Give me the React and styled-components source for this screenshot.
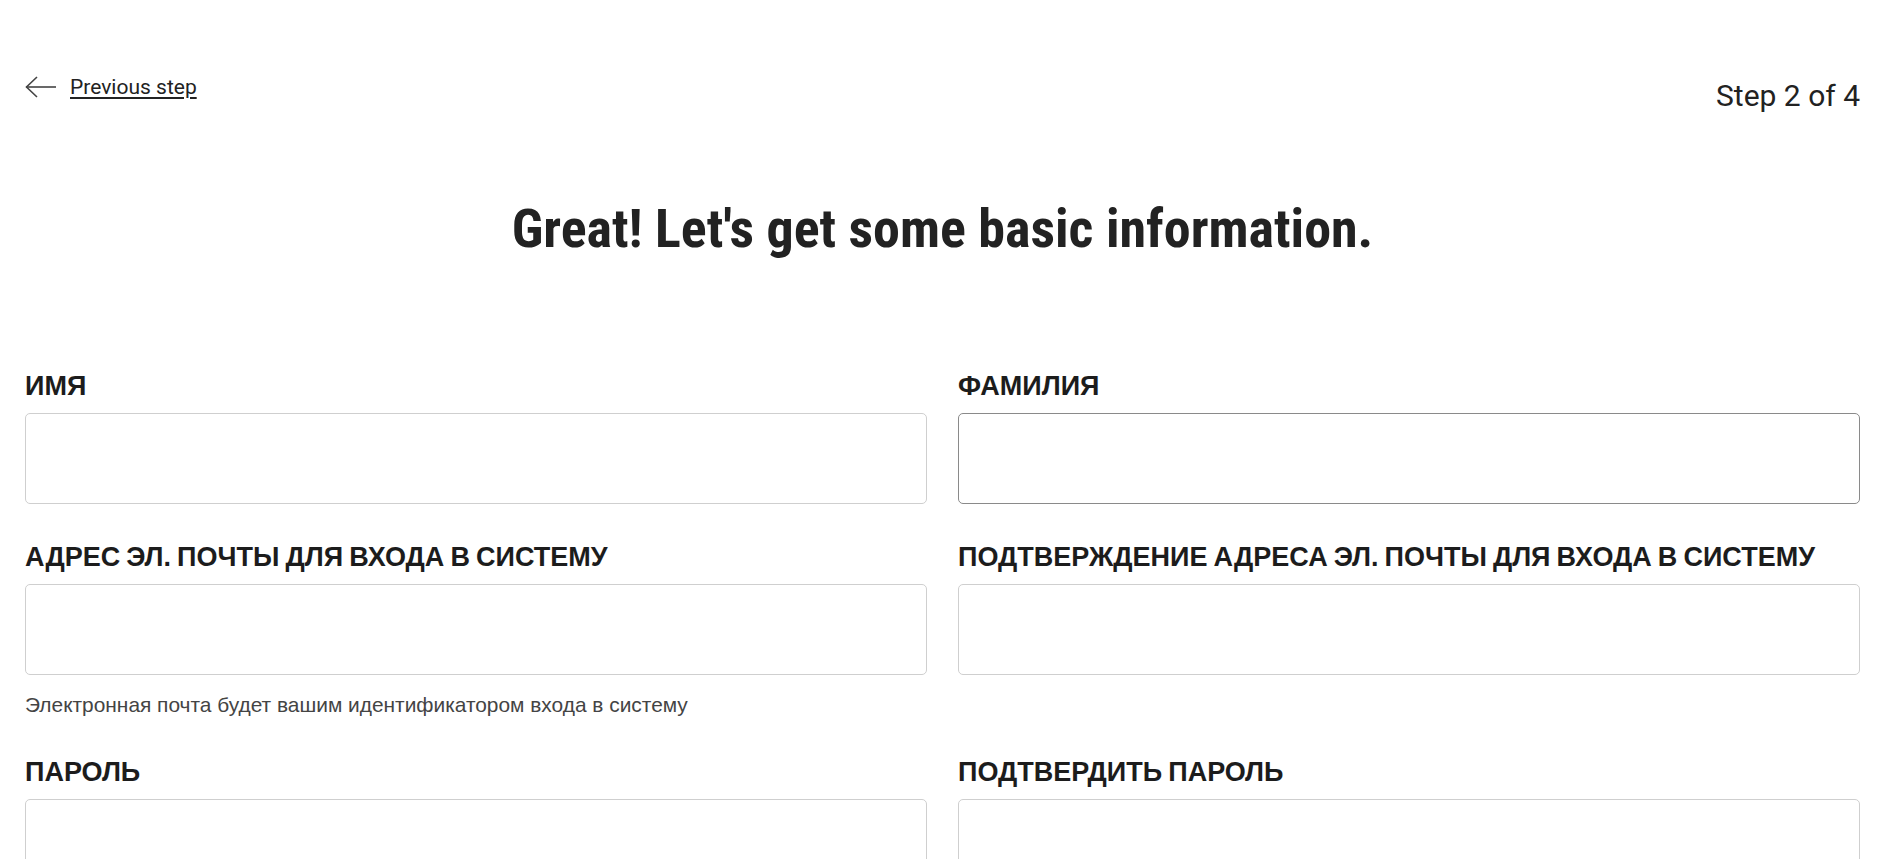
import React from "react";
import styled, { createGlobalStyle } from "styled-components";

const Global = createGlobalStyle`
  html, body { margin: 0; padding: 0; background: #fff; }
  body { font-family: "Liberation Sans", Arial, sans-serif; color: #222; }
  * { box-sizing: border-box; }
`;

const Page = styled.div`
  padding: 0 19px 0 25px;
`;

const Header = styled.header`
  display: flex;
  justify-content: space-between;
  align-items: flex-start;
  padding-top: 75px;
`;

const BackLink = styled.a`
  display: flex;
  align-items: center;
  gap: 14px;
  color: #222;
  font-family: Roboto, "Liberation Sans", sans-serif;
  font-size: 21px;
  line-height: 24px;
  text-decoration: none;
  cursor: pointer;
`;

const LinkText = styled.span`
  text-decoration: underline;
  text-decoration-thickness: 2px;
  text-underline-offset: 3px;
`;

const StepCount = styled.div`
  margin-top: 3px;
  font-family: Roboto, "Liberation Sans", sans-serif;
  font-size: 30px;
  line-height: 35px;
  color: #222;
`;

const Title = styled.h1`
  margin: 83px 0 0;
  text-align: center;
  font-family: "Roboto Condensed", Roboto, sans-serif;
  font-weight: 700;
  font-size: 54px;
  line-height: 65px;
  color: #222;
`;

const Form = styled.form`
  margin-top: 109px;
  display: grid;
  grid-template-columns: 1fr 1fr;
  column-gap: 31px;
  row-gap: 37px;
`;

const Field = styled.div`
  display: flex;
  flex-direction: column;
`;

const Label = styled.label`
  font-family: "Liberation Sans", Arial, sans-serif;
  font-weight: 700;
  font-size: 27px;
  line-height: 32px;
  word-spacing: -1.4px;
  color: #1c1c1c;
  margin-bottom: 11px;
`;

const Input = styled.input`
  height: 91px;
  width: 100%;
  border: 1px solid ${(p) => (p.$active ? "#8a8a8a" : "#cfcfcf")};
  border-radius: 5px;
  background: #fff;
  font-size: 22px;
  padding: 0 16px;
  outline: none;
`;

const Help = styled.div`
  margin: 17px 0 2px;
  font-family: "Liberation Sans", Arial, sans-serif;
  font-size: 20.9px;
  line-height: 25px;
  color: #444;
`;

const ArrowIcon = () => (
  <svg width="31" height="22" viewBox="0 0 31 22" fill="none">
    <path d="M1 11H31" stroke="#444" strokeWidth="1.6" />
    <path d="M12 1L1.5 11L12 21" stroke="#444" strokeWidth="1.6" fill="none" />
  </svg>
);

const fields = [
  { label: "ИМЯ" },
  { label: "ФАМИЛИЯ", active: true },
  {
    label: "АДРЕС ЭЛ. ПОЧТЫ ДЛЯ ВХОДА В СИСТЕМУ",
    help: "Электронная почта будет вашим идентификатором входа в систему",
  },
  { label: "ПОДТВЕРЖДЕНИЕ АДРЕСА ЭЛ. ПОЧТЫ ДЛЯ ВХОДА В СИСТЕМУ" },
  { label: "ПАРОЛЬ", type: "password" },
  { label: "ПОДТВЕРДИТЬ ПАРОЛЬ", type: "password" },
];

export default function App() {
  return (
    <Page>
      <Global />
      <Header>
        <BackLink>
          <ArrowIcon />
          <LinkText>Previous step</LinkText>
        </BackLink>
        <StepCount>Step 2 of 4</StepCount>
      </Header>
      <Title>Great! Let's get some basic information.</Title>
      <Form onSubmit={(e) => e.preventDefault()}>
        {fields.map((f, i) => (
          <Field key={i}>
            <Label>{f.label}</Label>
            <Input type={f.type || "text"} $active={f.active} />
            {f.help && <Help>{f.help}</Help>}
          </Field>
        ))}
      </Form>
    </Page>
  );
}
